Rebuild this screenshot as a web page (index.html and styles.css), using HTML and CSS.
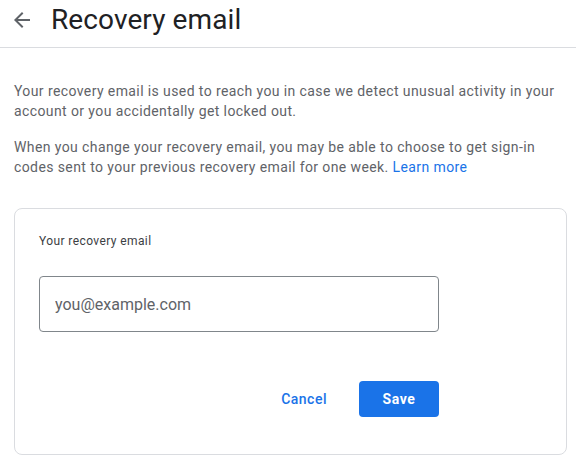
FILE: index.html
```html
<!DOCTYPE html>
<html lang="en">
<head>
<meta charset="utf-8">
<title>Recovery email</title>
<link rel="stylesheet" href="styles.css">
</head>
<body>
<header class="topbar">
  <button class="back" aria-label="Back">
    <svg width="24" height="24" viewBox="0 0 24 24"><path d="M20 11H7.83l5.59-5.59L12 4l-8 8 8 8 1.41-1.41L7.83 13H20v-2z" fill="#5f6368"/></svg>
  </button>
  <h1 class="title">Recovery email</h1>
</header>
<main class="content">
  <p class="desc">Your recovery email is used to reach you in case we detect unusual activity in your account or you accidentally get locked out.</p>
  <p class="desc">When you change your recovery email, you may be able to choose to get sign-in codes sent to your previous recovery email for one week. <a class="link" href="#">Learn more</a></p>
  <section class="card">
    <div class="label">Your recovery email</div>
    <input class="field" type="email" placeholder="you@example.com">
    <div class="actions">
      <button class="btn btn-text">Cancel</button>
      <button class="btn btn-primary">Save</button>
    </div>
  </section>
</main>
</body>
</html>
```

FILE: styles.css
```css
* { box-sizing: border-box; }
html, body { margin: 0; padding: 0; background: #fff; }
body {
  font-family: Roboto, "Noto Sans", Arial, sans-serif;
  color: #202124;
  width: 576px;
  overflow: hidden;
}
.topbar {
  display: flex;
  align-items: center;
  height: 48px;
  border-bottom: 1px solid #dadce0;
  padding: 0 0 0 10px;
}
.back {
  border: 0;
  background: none;
  padding: 0;
  width: 24px;
  height: 24px;
  display: flex;
  margin-top: -8px;
}
.title {
  margin: -8px 0 0 17px;
  font-size: 28px;
  font-weight: 400;
  line-height: 36px;
  color: #202124;
  letter-spacing: 0.1px;
}
.content {
  padding: 33px 9px 0 14px;
}
.desc {
  margin: 0 0 16px;
  font-size: 14px;
  line-height: 20px;
  color: #5f6368;
  letter-spacing: 0.4px;
}
.link { color: #1a73e8; text-decoration: none; }
.card {
  margin-top: 31px;
  border: 1px solid #dadce0;
  border-radius: 8px;
  padding: 24px 24px 37px 24px;
  display: flex;
  flex-direction: column;
  align-items: flex-start;
}
.label {
  font-size: 12px;
  line-height: 16px;
  font-weight: 400;
  color: #3c4043;
  letter-spacing: 0.4px;
}
.field {
  margin-top: 27px;
  width: 400px;
  height: 56px;
  border: 1px solid #80868b;
  border-radius: 4px;
  padding: 0 15px;
  font-family: Roboto, Arial, sans-serif;
  font-size: 16px;
  color: #202124;
  outline: none;
}
.field::placeholder { color: #5f6368; }
.actions {
  margin-top: 49px;
  width: 400px;
  display: flex;
  justify-content: flex-end;
  gap: 8px;
}
.btn {
  height: 36px;
  border: 0;
  border-radius: 4px;
  padding: 0 24px;
  font-family: Roboto, Arial, sans-serif;
  font-size: 14px;
  font-weight: 500;
  letter-spacing: 0.6px;
  cursor: pointer;
}
.btn-text { background: none; color: #1a73e8; letter-spacing: 0.5px; }
.btn-primary { background: #1a73e8; color: #fff; width: 80px; padding: 0; font-weight: 700; }
```
